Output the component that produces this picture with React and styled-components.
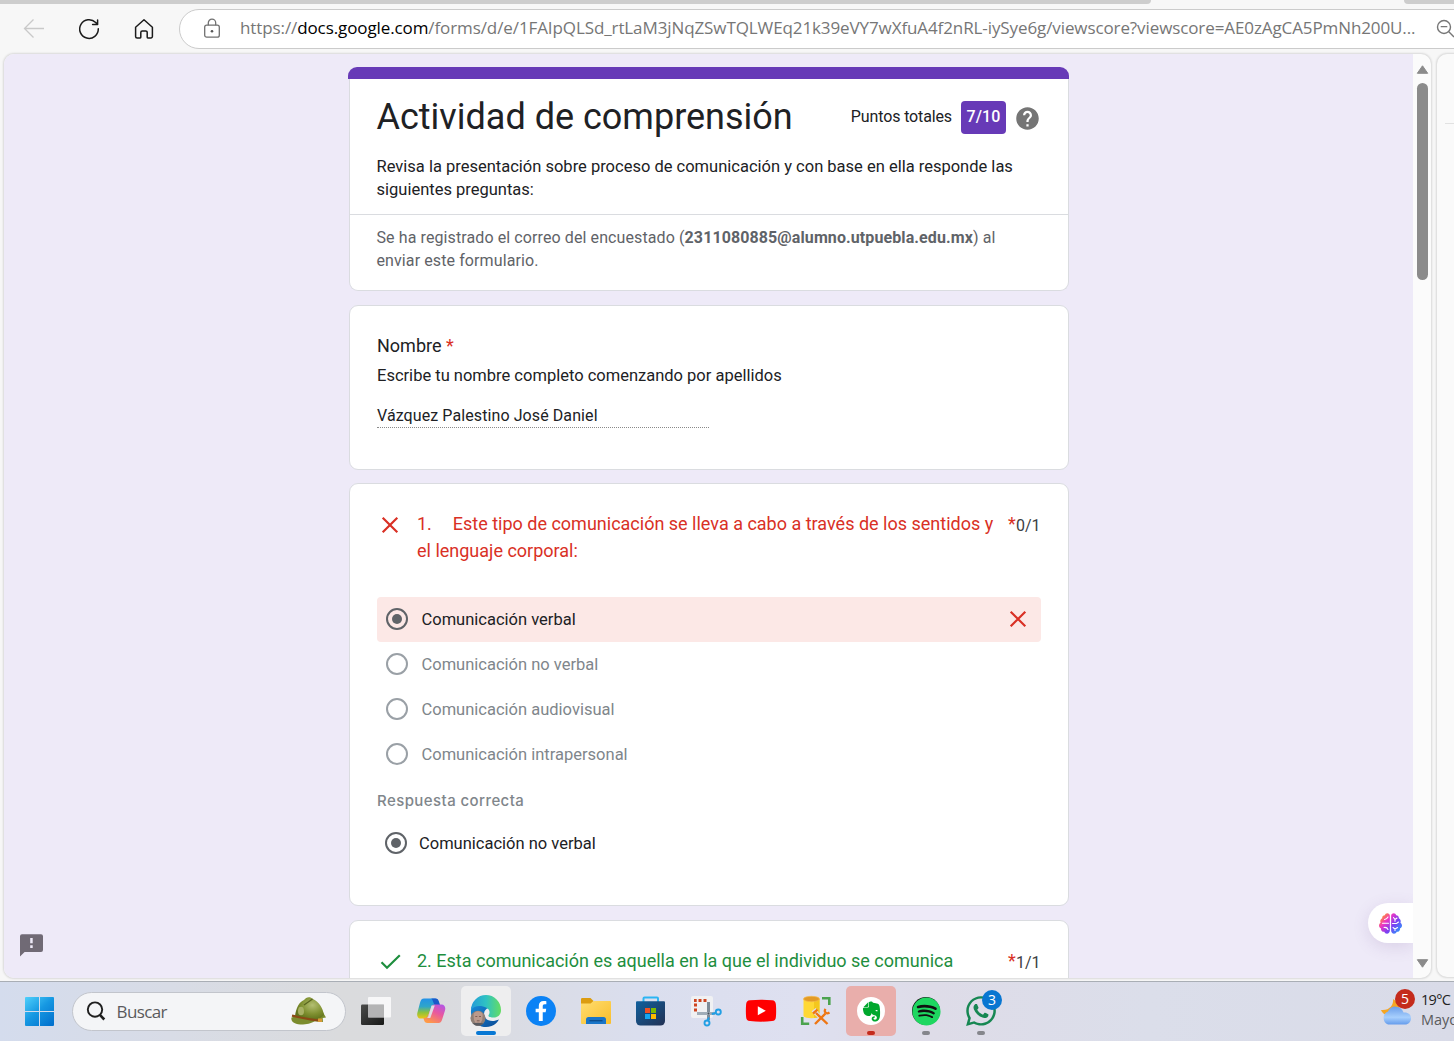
import React from 'react';
import styled, { createGlobalStyle } from 'styled-components';
import { FaEvernote, FaSpotify, FaWhatsapp, FaBrain, FaFacebookF } from 'react-icons/fa';

const Global = createGlobalStyle`
  * { box-sizing: border-box; }
  html, body { margin: 0; padding: 0; }
  body { width: 1454px; height: 1041px; overflow: hidden; background: #f7f7f7; font-family: Roboto, "Liberation Sans", sans-serif; }
  svg { display: block; flex: none; }
`;

const Window = styled.div`
  width: 1454px; height: 1041px; overflow: hidden; display: flex; flex-direction: column; background: #f7f7f7;
`;

/* Browser chrome */
const TabStrip = styled.div`
  height: 4px; flex: none; display: flex; justify-content: space-between;
`;
const TabEdge = styled.div`
  width: ${p => p.$w}px; background: #cdcdcd;
  border-radius: ${p => (p.$side === 'left' ? '0 0 9px 0' : '0 0 0 9px')};
`;
const Toolbar = styled.div`
  height: 49px; flex: none; display: flex; align-items: flex-start; padding: 5px 0 0 22px;
`;
const NavButton = styled.div`
  width: 24px; height: 40px; margin-right: 31px; margin-top: 0; display: flex; align-items: center; justify-content: center;
`;
const AddressBar = styled.div`
  width: 1400px; flex: none; height: 40px; margin-left: -8px; border: 1px solid #cbcbcb; border-radius: 20px; background: #fff;
  display: flex; align-items: center; padding-left: 22px;
`;
const Url = styled.div`
  width: 1178px; margin: 0 0 2px 18px; white-space: nowrap; color: #767676;
  font: 400 17px/24px "Open Sans", "Noto Sans", sans-serif; letter-spacing: ${p => p.$ls}px;
  b { font-weight: 400; color: #000; }
`;
const MagnifierBox = styled.div`margin: 0 0 1px 18px;`;

/* Content panes */
const Panes = styled.div`
  flex: none; height: 928px; padding-left: 4px; display: flex; gap: 6px;
`;
const PagePane = styled.div`
  position: relative; width: 1427px; height: 924px; margin-top: 1px; border-radius: 10px; overflow: hidden; flex: none;
  display: flex; background: #fbfbfb; box-shadow: 0 0 2px 1px rgba(0, 0, 0, 0.12);
`;
const Viewport = styled.div`
  position: relative; width: 1409px; height: 924px; background: #eeeaf8; overflow: hidden; padding: 13px 0 0 344px;
`;
const Scrollbar = styled.div`
  width: 18px; height: 924px; display: flex; flex-direction: column; align-items: center; padding: 11px 0 10px; 
`;
const Thumb = styled.div`
  width: 11px; height: 197px; margin: 9px 0 auto; border-radius: 6px; background: #8b8b8b;
`;
const SidePane = styled.div`
  width: 60px; flex: none; height: 923px; margin-top: 1px; border-radius: 10px; background: #fafafa; box-shadow: 0 0 2px 1px rgba(0, 0, 0, 0.12);
  padding: 69px 0 0 8px;
`;
const SideRule = styled.div`height: 1px; background: #e2e2e2;`;

/* Form */
const Form = styled.main`
  width: 721px; display: flex; flex-direction: column; align-items: flex-end; gap: 14px;
`;
const Card = styled.section`
  width: 720px; height: ${p => p.$h}px; flex: none; background: #fff; border: 1px solid #dadce0; border-radius: 9px;
  margin-top: ${p => p.$mt || 0}px; padding: ${p => p.$pad || 0}px 27px 0;
`;
const HeaderCard = styled(Card)`
  width: 721px; padding: 0; border: 0; background: none;
`;
const AccentBar = styled.div`height: 12px; background: #673ab7; border-radius: 9px 9px 0 0;`;
const HeaderBody = styled.div`
  margin-left: 1px; height: 212px; background: #fff; border: 1px solid #dadce0; border-top: 0; border-radius: 0 0 9px 9px;
`;
const HeaderTop = styled.div`
  height: 136px; border-bottom: 1px solid #dadce0; padding: 16px 29px 0 26.5px;
`;
const TitleRow = styled.div`display: flex; height: 45px; align-items: flex-start; margin-bottom: 15px;`;
const Title = styled.h1`
  margin: 0; flex: 1; font-size: 36px; line-height: 45px; font-weight: 400; color: #202124; white-space: nowrap;
`;
const Score = styled.div`display: flex; align-items: center; margin-top: 6px; height: 33px;`;
const ScoreBadge = styled.span`
  width: 45px; height: 33px; margin: 0 10px 0 9px; border-radius: 4px; background: #673ab7; color: #fff;
  font-size: 16px; font-weight: 500; line-height: 31px; text-align: center; letter-spacing: 0.1px;
`;
const Line = styled.div`
  font-size: ${p => p.$size || 16.5}px; line-height: ${p => p.$lh || 23}px; color: ${p => p.$color || '#202124'};
  letter-spacing: ${p => p.$ls || 0}px; font-weight: 400; white-space: pre;
`;
const ScoreLabel = styled(Line)`margin-bottom: 2px;`;
const HelpWrap = styled.span`margin: 1px -2px 0;`;
const FieldHint = styled(Line)`margin-top: 5px;`;
const EmailNote = styled.div`padding: 11px 26.5px 0;`;
const Required = styled.span`color: #d93025;`;
const QuestionNumber = styled.span`margin-right: 3px;`;
const AnswerField = styled.div`
  width: 332px; height: 24px; margin-top: 17px; border-bottom: 1px dotted #8a8a8a;
`;
const QuestionRow = styled.div`display: flex; align-items: flex-start; height: ${p => p.$h}px;`;
const MarkBox = styled.div`width: 40px; flex: none; padding: ${p => p.$top}px 0 0 3px;`;
const QuestionText = styled.div`flex: 1;`;
const Points = styled.div`
  width: 33px; flex: none; display: flex; align-items: flex-start; font-size: 16px; line-height: 27px; color: #3c4043; padding-top: 2px;
  ${Required} { font-size: 18px; line-height: 24px; width: 8px; }
`;
const Option = styled.div`
  height: 45px; display: flex; align-items: center; padding: 0 13px 0 9px; border-radius: 4px; background: ${p => (p.$wrong ? '#fce8e6' : 'transparent')};
`;
const OptionLabel = styled(Line)`flex: 1; margin-left: 13.5px;`;
const Options = styled.div`width: 664px;`;
const CorrectTitle = styled.div`
  margin-top: 12px; font: 500 15px/24px Inter, Roboto, sans-serif; color: #80868b; letter-spacing: ${p => p.$ls}px;
`;
const CorrectRow = styled.div`
  display: flex; align-items: center; height: 46px; margin-top: 7px; padding-left: 7.5px;
  ${OptionLabel} { margin-left: 12.5px; }
`;
const RadioRing = styled.span`
  width: 22px; height: 22px; flex: none; margin-bottom: 1px; border-radius: 50%; border: 2px solid ${p => (p.$on ? '#5f6368' : '#9aa0a6')};
  display: flex; align-items: center; justify-content: center;
  &::after { content: ''; width: 10px; height: 10px; border-radius: 50%; background: ${p => (p.$on ? '#5f6368' : 'transparent')}; }
`;
const WrongMark = styled.span`margin-bottom: 1px;`;

const FeedbackButton = styled.div`position: absolute; left: 16px; bottom: 21px;`;
const BrainButton = styled.div`
  position: absolute; right: 0; bottom: 35px; width: 45px; height: 40px; border-radius: 20px 0 0 20px; background: #fff;
  box-shadow: 0 4px 16px rgba(120, 80, 150, 0.16); display: flex; align-items: center; padding-left: 11px;
`;

/* Taskbar */
const Taskbar = styled.footer`
  height: 60px; flex: none; border-top: 1px solid #a9aeb5; display: flex; align-items: flex-start; padding: 4px 0 0 25px;
  background: linear-gradient(90deg, #d4dced 0, #d8dce6 170px, #dadbdd 340px, #dadbde 440px, #dadeee 640px, #dee0f0 800px, #dedce8 930px, #dbdeea 1150px, #d9dbe8 1454px);
`;
const StartButton = styled.div`margin-top: 11px; width: 46.500px;`;
const SearchBox = styled.div`
  width: 274px; height: 39px; margin: 6px 5.500px 0 0; border: 1px solid #c2c5cc; border-radius: 20px; background: #f4f5f7;
  display: flex; align-items: center; padding: 0 18px 1px 13px;
`;
const SearchLabel = styled.span`
  flex: 1; margin: 1px 0 0 11px; color: #5a5a5c; font: 400 17px/24px "Open Sans", "Noto Sans", sans-serif; letter-spacing: -0.6px;
`;
const Apps = styled.div`display: flex; gap: 5px;`;
const AppSlot = styled.div`
  position: relative; width: 50px; height: 50px; border-radius: 5px; display: flex; align-items: center; justify-content: center;
  background: ${p => p.$bg || 'transparent'};
`;
const Indicator = styled.span`
  position: absolute; left: 50%; bottom: 1px; width: ${p => p.$w}px; margin-left: ${p => -p.$w / 2}px; height: 4px; border-radius: 2px; background: ${p => p.$c};
`;
const CountBadge = styled.span`
  position: absolute; left: ${p => p.$x}px; top: ${p => p.$y}px; width: 20px; height: 20px; border-radius: 50%; background: ${p => p.$c}; color: #fff;
  font: 400 14px/20px "Open Sans", sans-serif; text-align: center;
`;
const Disc = styled.span`
  width: ${p => p.$s}px; height: ${p => p.$s}px; border-radius: 50%; background: ${p => p.$c}; color: ${p => p.$fg || '#fff'};
  display: flex; align-items: center; justify-content: center;
`;
const Weather = styled.div`position: relative; margin-left: auto; width: 75px; height: 50px; display: flex; flex: none;`;
const WeatherArt = styled.span`position: absolute; left: 1px; top: 9px;`;
const WeatherText = styled.div`
  margin-left: 42px; padding-top: 4px; font: 400 14.5px/20px "Open Sans", sans-serif; color: #222; letter-spacing: -0.7px; white-space: nowrap;
  span { display: block; color: #5b5b5d; letter-spacing: 0; }
`;

const Cross = () => (
  <svg width="20" height="20" viewBox="0 0 20 20"><path d="M2.7 2.7 17.3 17.3M17.3 2.7 2.7 17.3" stroke="#d93025" strokeWidth="2.2" /></svg>
);
const Check = () => (
  <svg width="22" height="18" viewBox="0 0 22 18"><path d="M1.5 9.3 7 14.8 19.8 2.2" fill="none" stroke="#1e8e3e" strokeWidth="2.2" /></svg>
);

const Choice = ({ label, on, wrong }) => (
  <Option $wrong={wrong}>
    <RadioRing $on={on} />
    <OptionLabel $color={on ? '#202124' : '#80868b'}>{label}</OptionLabel>
    {wrong && <WrongMark><Cross /></WrongMark>}
  </Option>
);

const BackIcon = () => (
  <svg width="24" height="24" viewBox="0 0 24 24" fill="none" stroke="#c9c9c9" strokeWidth="1.3"><path d="M22 11.500H2.500M11.500 2.500 2.500 11.500l9 9" /></svg>
);
const ReloadIcon = () => (
  <svg width="24" height="24" viewBox="0 0 24 24" fill="none" stroke="#1b1b1b" strokeWidth="1.5" strokeLinecap="round" strokeLinejoin="round">
    <path d="M21.300 11.800A9.300 9.300 0 1 1 18.700 5.600L20.400 7.300M20.600 3v4.600h-5" />
  </svg>
);
const HomeIcon = () => (
  <svg width="24" height="24" viewBox="0 0 24 24" fill="none" stroke="#1b1b1b" strokeWidth="1.5" strokeLinejoin="round">
    <path d="M3.6 10.2 12 2.8l8.4 7.4v9.2a1.5 1.5 0 0 1-1.5 1.5h-3.1a.6.6 0 0 1-.6-.6v-4.9a1.5 1.5 0 0 0-1.5-1.5h-3.4a1.5 1.5 0 0 0-1.5 1.5v4.9a.6.6 0 0 1-.6.6H5.1a1.5 1.5 0 0 1-1.5-1.5Z" />
  </svg>
);
const LockIcon = () => (
  <svg width="20" height="22" viewBox="0 0 20 22" fill="none" stroke="#707070" strokeWidth="1.3">
    <rect x="2.7" y="7.2" width="14.6" height="12" rx="2" /><path d="M6.3 7.200V4.900a3.700 3.700 0 0 1 7.400 0v2.300" /><circle cx="10" cy="13.200" r="1.300" fill="#555" stroke="none" />
  </svg>
);
const ZoomOutIcon = () => (
  <svg width="20" height="20" viewBox="0 0 20 20" fill="none" stroke="#767676" strokeWidth="1.4">
    <circle cx="8" cy="8" r="6.5" /><path d="M4.7 7.6h6.6M12.8 12.8 18 18" />
  </svg>
);
const HelpIcon = () => (
  <svg width="27" height="27" viewBox="0 0 24 24" fill="#757575">
    <path d="M12 2C6.48 2 2 6.48 2 12s4.48 10 10 10 10-4.48 10-10S17.52 2 12 2zm1 17h-2v-2h2v2zm2.07-7.75-.9.92C13.45 12.9 13 13.5 13 15h-2v-.5c0-1.1.45-2.1 1.17-2.83l1.24-1.26c.37-.36.59-.86.59-1.41 0-1.1-.9-2-2-2s-2 .9-2 2H8c0-2.21 1.79-4 4-4s4 1.79 4 4c0 .88-.36 1.68-.93 2.25z" />
  </svg>
);
const FeedbackIcon = () => (
  <svg width="23" height="23" viewBox="0 0 23 23">
    <path d="M2 .2h19a2 2 0 0 1 2 2V16a2 2 0 0 1-2 2H4.6L0 22.6V2.2a2 2 0 0 1 2-2Z" fill="#706a75" />
    <path d="M10.2 4h2.5v5.3h-2.5zM10.2 11.3h2.5v2.6h-2.5z" fill="#eeeaf8" />
  </svg>
);
const Triangle = ({ down }) => (
  <svg width="13" height="9" viewBox="0 0 13 9"><path d={down ? 'M1.3.7h10.4L6.500 8.200Z' : 'M1.300 8.300h10.400L6.500.8Z'} fill="#8b8b8b" stroke="#8b8b8b" strokeLinejoin="round" /></svg>
);
const BrainIcon = () => (
  <svg width="23" height="21" viewBox="0 0 23 21">
    <defs>
      <linearGradient id="brain" gradientUnits="userSpaceOnUse" x1="0" y1="0" x2="576" y2="512"><stop offset="0" stopColor="#ff9a2e" /><stop offset=".14" stopColor="#ff8a3a" /><stop offset=".34" stopColor="#ee35c4" /><stop offset=".6" stopColor="#7b3ff2" /><stop offset="1" stopColor="#18b0ff" /></linearGradient>
    </defs>
    <FaBrain width="23" height="21" size={23} y="-1" style={{ fill: 'url(#brain)' }} />
    <g fill="none" stroke="#fff" strokeWidth="1.100" strokeLinecap="round">
      <path d="M5.500 6.500Q8 6 9 4M3.500 10.200H9.500M5 14.500q3-.5 4 2" />
      <path d="M14.500 4.500 16 6.500 18 5M16 6.500v1.700M13.500 10.500h4l2-1.500M14 14.500l2 1.500 2.500-1.500M16 16v1.500" />
    </g>
  </svg>
);

const WindowsIcon = () => (
  <svg width="29" height="29" viewBox="0 0 29 29">
    <defs><linearGradient id="win" gradientUnits="userSpaceOnUse" x1="0" y1="0" x2="25" y2="29"><stop offset="0" stopColor="#4fd0fb" /><stop offset=".5" stopColor="#1698e2" /><stop offset="1" stopColor="#0272ce" /></linearGradient></defs>
    <path d="M1 0h13v14H0V1a1 1 0 0 1 1-1ZM15 0h13a1 1 0 0 1 1 1v13H15ZM0 15h14v14H1a1 1 0 0 1-1-1ZM15 15h14v13a1 1 0 0 1-1 1H15Z" fill="url(#win)" />
  </svg>
);
const SearchIcon = () => (
  <svg width="20" height="20" viewBox="0 0 20 20" fill="none" stroke="#1f1f1f"><circle cx="9" cy="8.600" r="7.200" strokeWidth="1.900" /><path d="m13.700 13.600 4.600 4.900" strokeWidth="2.600" /></svg>
);
const HelmetIcon = () => (
  <svg width="37" height="30" viewBox="0 0 37 30">
    <defs><radialGradient id="helm" cx=".6" cy=".35" r=".65"><stop offset="0" stopColor="#b4bf72" /><stop offset=".6" stopColor="#7f9030" /><stop offset="1" stopColor="#5f711b" /></radialGradient></defs>
    <path d="M1.500 21.500C.5 26 5 28.500 13 28.500c6 0 9-2.200 12-3.200l8 .7-.3-4 3.300-.5L31 13Z" fill="#7b8c2e" />
    <path d="M5 20C6 12 9 6 14 4c2-3 6-4 9-1 6 3 10 9 11 16-4 4-8 5-13 5Z" fill="url(#helm)" />
    <ellipse cx="11" cy="15" rx="3" ry="4.300" fill="#a8b165" />
    <path d="M14 9 22.500 3" stroke="#59651f" fill="none" strokeWidth="1.200" />
    <path d="M2 19.700c8 1.600 16 4 29 5" fill="none" stroke="#8b4a16" strokeWidth="2.200" />
    <path d="M28 22.500h4v3.500h-4z" fill="#d79a36" />
  </svg>
);
const Slot = ({ children }) => <svg width="50" height="50" viewBox="0 0 50 50">{children}</svg>;

const TaskViewIcon = () => (
  <Slot>
    <defs><linearGradient id="tv" x1="0" y1="0" x2="1" y2="1"><stop offset="0" stopColor="#4a4b4a" /><stop offset="1" stopColor="#171817" /></linearGradient></defs>
    <rect x="10" y="18.500" width="23" height="20.500" rx="1.200" fill="url(#tv)" />
    <rect x="17" y="11" width="23" height="20.500" rx="1" fill="#fff" opacity=".78" />
    <rect x="17" y="18.500" width="16" height="13" fill="#a9aaab" opacity=".75" />
  </Slot>
);
const CopilotIcon = () => (
  <Slot>
    <defs>
      <linearGradient id="cpA" x1=".2" y1="0" x2=".2" y2="1"><stop offset="0" stopColor="#2391e8" /><stop offset=".4" stopColor="#2fa6c9" /><stop offset=".7" stopColor="#8fc33c" /><stop offset="1" stopColor="#efc514" /></linearGradient>
      <linearGradient id="cpB" x1=".9" y1="0" x2=".3" y2="1"><stop offset="0" stopColor="#b156e8" /><stop offset=".45" stopColor="#e857a0" /><stop offset="1" stopColor="#ff9b45" /></linearGradient>
    </defs>
    <path d="M18 12.500h11c2 0 2.800 1.300 3.400 3l1.300 3.700h-5c-2 0-3 1-3.600 2.700l-3 8c-.6 1.700-1.500 2.700-3.300 2.700h-4c-3 0-4.200-2.700-3.400-5.800l2.600-10c.7-2.800 1.800-4.300 4-4.300Z" fill="url(#cpA)" />
    <path d="M25 12.500h4.500c2 0 2.800 1.300 3.400 3l1.200 3.700H30c-3 0-3-6.700-5-6.700Z" fill="#1959c9" />
    <path d="M32.500 37h-11c-2 0-3-1.300-3.500-3l-.6-2c2.800 0 4-.7 4.800-2.700l3-8c.6-1.700 1.600-2.700 3.300-2.700h7c3 0 4.400 2.700 3.500 5.800l-2.700 8.600c-.8 2.700-1.700 4-3.800 4Z" fill="url(#cpB)" />
    <path d="M25.500 19.500h3.300l-4.500 12.500h-3.300c1-.6 1.200-1.500 1.500-2.500Z" fill="#dddce4" />
  </Slot>
);
const EdgeIcon = () => (
  <Slot>
    <defs>
      <linearGradient id="edA" x1="0" y1=".5" x2="1" y2=".5"><stop offset="0" stopColor="#239bd9" /><stop offset=".5" stopColor="#2fc2c3" /><stop offset="1" stopColor="#65dd62" /></linearGradient>
      <linearGradient id="edB" x1="0" y1="0" x2="1" y2="1"><stop offset="0" stopColor="#168ddb" /><stop offset="1" stopColor="#0b4a95" /></linearGradient>
    </defs>
    <path d="M10 25a15 15 0 0 1 .5-4c4-4 13-5 17 1-4 1-6 6-3 10 3 4 9 3.500 13.500 1.500A15 15 0 0 1 10 25Z" fill="url(#edB)" />
    <path d="M10 24A15 15 0 0 1 40 24c.2 5-3.500 7.500-7.500 7.500-3 0-5.500-.8-5-2.300 2-2.200 1.200-5.700-2-7.400C20 19 13 19.500 10 24Z" fill="url(#edA)" />
    <circle cx="17" cy="32.300" r="7.500" fill="#8f7f76" />
    <path d="M12.500 29c0-5 9-5 9.200 0l-.5 5-2 3.600h-4.400L13 34Z" fill="#bb9a8c" />
    <path d="M14.300 30.500h2M18 30.500h2M15.800 34.800h2.800" stroke="#6d5048" strokeWidth=".8" />
    <path d="M11.500 37.200c3-.7 8-.7 11 0-3 3.400-8 3.400-11 0Z" fill="#5a5b60" />
  </Slot>
);
const ExplorerIcon = () => (
  <Slot>
    <defs><linearGradient id="exp" x1="0" y1="0" x2="1" y2="1"><stop offset="0" stopColor="#ffdd70" /><stop offset="1" stopColor="#f9be2b" /></linearGradient></defs>
    <path d="M10 13.200a1.200 1.200 0 0 1 1.200-1.200h8.300l3 3-2.500 4H10Z" fill="#dc9c10" />
    <path d="M10 17.500h9.500l3-2.500H39a1 1 0 0 1 1 1v21a1 1 0 0 1-1 1H11a1 1 0 0 1-1-1Z" fill="url(#exp)" />
    <path d="M15 38v-4.500a2.500 2.500 0 0 1 2.500-2.500h15a2.500 2.500 0 0 1 2.500 2.500V38Z" fill="#1975c8" /><path d="M18.500 34.700h13" stroke="#0c4b8b" strokeWidth="1.300" />
  </Slot>
);
const StoreIcon = () => (
  <Slot>
    <defs><linearGradient id="sto" x1="0" y1="0" x2="1" y2="1"><stop offset="0" stopColor="#10609d" /><stop offset="1" stopColor="#233154" /></linearGradient></defs>
    <path d="M17.500 17v-4.500a1 1 0 0 1 1-1h12.500a1 1 0 0 1 1 1V17" fill="none" stroke="#2cb5f3" strokeWidth="2" />
    <path d="M10 16.200a1 1 0 0 1 1-1h27a1 1 0 0 1 1 1V35a4.500 4.500 0 0 1-4.500 4.500h-20A4.500 4.500 0 0 1 10 35Z" fill="url(#sto)" />
    <path d="M19 22h5v5h-5z" fill="#f25022" /><path d="M25 22h5v5h-5z" fill="#7fba00" /><path d="M19 28h5v5h-5z" fill="#16a6f0" /><path d="M25 28h5v5h-5z" fill="#ffb900" />
  </Slot>
);
const SnipIcon = () => (
  <Slot>
    <rect x="10" y="10" width="22" height="22" rx="2" fill="#f0f1f3" />
    <path d="M13 14.500h2.700M17.500 14.500h3M22.500 14.500h3M14.500 17.500v3M14.500 22.500v3" fill="none" stroke="#cf4520" strokeWidth="3" />
    <path d="M27.500 16v18" stroke="#7f8c98" strokeWidth="3" /><path d="M16 27.500h18" stroke="#a1adb8" strokeWidth="3" />
    <circle cx="26" cy="37" r="2.500" fill="none" stroke="#229fe4" strokeWidth="1.900" /><circle cx="37.300" cy="26" r="2.500" fill="none" stroke="#229fe4" strokeWidth="1.900" />
    <path d="m26.500 34.500 1.500-3M34.800 27l-4 1" stroke="#229fe4" strokeWidth="2" /><circle cx="27.500" cy="27.500" r="1" fill="#444e58" />
  </Slot>
);
const YouTubeIcon = () => (
  <Slot><path d="M14 14.300q11-1.100 22 0c2.600.2 3.700 1.500 3.900 4.200q.5 6.500 0 12.500c-.2 2.700-1.300 3.900-3.900 4.100q-11 1.100-22 0c-2.600-.2-3.700-1.400-3.900-4.100q-.5-6 0-12.500c.2-2.700 1.300-4 3.900-4.200Z" fill="#f00" /><path d="m21.800 20.300 8 4.500-8 4.500Z" fill="#fff" /></Slot>
);
const DbToolIcon = () => (
  <Slot>
    <path d="M12.500 13v17c2 3 14 3 16 0V13Z" fill="#ffd835" /><path d="M23 15v17c3 0 5-1 5.500-2V13Z" fill="#f4c71d" /><ellipse cx="20.500" cy="13" rx="8" ry="2.700" fill="#e39b26" stroke="#f5bb4c" strokeWidth=".7" />
    <path d="M31 12.200h7.300v6.800M11.200 31v6.800h7" fill="none" stroke="#4ba34f" strokeWidth="2.600" />
    <path d="m25 27 11.500 11M22 27l4-3.300M34.500 27.500 24 38" stroke="#dfe0ee" strokeWidth="4.400" fill="none" />
    <path d="m25 27 11.500 11M22 27.500l4.500-3.800M34.500 27.500 24 38" stroke="#ee7615" strokeWidth="2.400" fill="none" /><path d="M34.500 22.800c-2 3 .7 5.800 4 3.700" fill="none" stroke="#ee7615" strokeWidth="2.200" />
  </Slot>
);
const WeatherIcon = () => (
  <svg width="32" height="30" viewBox="0 0 32 30">
    <defs><linearGradient id="cl" x1="0" y1="0" x2="0" y2="1"><stop offset="0" stopColor="#6b9ee9" /><stop offset=".6" stopColor="#a7cffd" /><stop offset="1" stopColor="#659cec" /></linearGradient></defs>
    <path d="M13 4c1 6-4 12-12 11 2 5 8 7 14 4s7-10-2-15Z" fill="#f6a623" />
    <path d="M8 29.500a7 7 0 0 1 0-13 8.300 8.300 0 0 1 15.500 1C28 17 31 19.500 31 23.200c0 3.500-2.500 6.300-6 6.300Z" fill="url(#cl)" />
  </svg>
);

export default function App() {
  return (
    <Window>
      <Global />
      <TabStrip><TabEdge $w={1151} $side="left" /><TabEdge $w={50} $side="right" /></TabStrip>
      <Toolbar>
        <NavButton><BackIcon /></NavButton>
        <NavButton><ReloadIcon /></NavButton>
        <NavButton><HomeIcon /></NavButton>
        <AddressBar>
          <LockIcon />
          <Url $ls={-0.1}>https://<b>docs.google.com</b>/forms/d/e/1FAIpQLSd_rtLaM3jNqZSwTQLWEq21k39eVY7wXfuA4f2nRL-iySye6g/viewscore?viewscore=AE0zAgCA5PmNh200U...</Url>
          <MagnifierBox><ZoomOutIcon /></MagnifierBox>
        </AddressBar>
      </Toolbar>
      <Panes>
        <PagePane>
          <Viewport>
            <Form>
              <HeaderCard $h={224}>
                <AccentBar />
                <HeaderBody>
                  <HeaderTop>
                    <TitleRow>
                      <Title>Actividad de comprensión</Title>
                      <Score><ScoreLabel $size={16} $ls={-0.13}>Puntos totales</ScoreLabel><ScoreBadge>7/10</ScoreBadge><HelpWrap><HelpIcon /></HelpWrap></Score>
                    </TitleRow>
                    <Line>Revisa la presentación sobre proceso de comunicación y con base en ella responde las</Line>
                    <Line>siguientes preguntas:</Line>
                  </HeaderTop>
                  <EmailNote>
                    <Line $size={16} $ls={0.1} $color="#5f6368">Se ha registrado el correo del encuestado (<b>2311080885@alumno.utpuebla.edu.mx</b>) al</Line>
                    <Line $size={16} $ls={0.1} $color="#5f6368">enviar este formulario.</Line>
                  </EmailNote>
                </HeaderBody>
              </HeaderCard>

              <Card $h={165} $pad={26}>
                <Line $size={18} $lh={27}>Nombre <Required>*</Required></Line>
                <FieldHint>Escribe tu nombre completo comenzando por apellidos</FieldHint>
                <AnswerField><Line $size={16} $ls={0.09}>Vázquez Palestino José Daniel</Line></AnswerField>
              </Card>

              <Card $h={423} $mt={-1} $pad={26}>
                <QuestionRow $h={87}>
                  <MarkBox $top={5}><Cross /></MarkBox>
                  <QuestionText>
                    <Line $size={18} $lh={27} $color="#d93025"><QuestionNumber>1.</QuestionNumber>{'\u00a0\u00a0\u00a0 Este tipo de comunicación se lleva a cabo a través de los sentidos y'}</Line>
                    <Line $size={18} $lh={27} $color="#d93025">el lenguaje corporal:</Line>
                  </QuestionText>
                  <Points><Required>*</Required>0/1</Points>
                </QuestionRow>
                <Options>
                  <Choice label="Comunicación verbal" on wrong />
                  <Choice label="Comunicación no verbal" />
                  <Choice label="Comunicación audiovisual" />
                  <Choice label="Comunicación intrapersonal" />
                </Options>
                <CorrectTitle $ls={0.42}>Respuesta correcta</CorrectTitle>
                <CorrectRow><RadioRing $on /><OptionLabel>Comunicación no verbal</OptionLabel></CorrectRow>
              </Card>

              <Card $h={200} $pad={26}>
                <QuestionRow $h={86}>
                  <MarkBox $top={6}><Check /></MarkBox>
                  <QuestionText>
                    <Line $size={18} $lh={27} $color="#1e8e3e">2. Esta comunicación es aquella en la que el individuo se comunica</Line>
                  </QuestionText>
                  <Points><Required>*</Required>1/1</Points>
                </QuestionRow>
              </Card>
            </Form>
            <FeedbackButton><FeedbackIcon /></FeedbackButton>
            <BrainButton><BrainIcon /></BrainButton>
          </Viewport>
          <Scrollbar><Triangle /><Thumb /><Triangle down /></Scrollbar>
        </PagePane>
        <SidePane><SideRule /></SidePane>
      </Panes>
      <Taskbar>
        <StartButton><WindowsIcon /></StartButton>
        <SearchBox><SearchIcon /><SearchLabel>Buscar</SearchLabel><HelmetIcon /></SearchBox>
        <Apps>
          <AppSlot><TaskViewIcon /></AppSlot>
          <AppSlot><CopilotIcon /></AppSlot>
          <AppSlot $bg="#eeeeef"><EdgeIcon /><Indicator $w={20} $c="#0878d4" /></AppSlot>
          <AppSlot><Disc $s={30} $c="#0b82f5"><FaFacebookF size={20} /></Disc></AppSlot>
          <AppSlot><ExplorerIcon /></AppSlot>
          <AppSlot><StoreIcon /></AppSlot>
          <AppSlot><SnipIcon /></AppSlot>
          <AppSlot><YouTubeIcon /></AppSlot>
          <AppSlot><DbToolIcon /></AppSlot>
          <AppSlot $bg="#e9aeab"><Disc $s={28} $c="#fff" $fg="#00a82d"><FaEvernote size={23} /></Disc><Indicator $w={8} $c="#c42b1c" /></AppSlot>
          <AppSlot><Disc $s={28} $c="#111" $fg="#1ed760"><FaSpotify size={29} /></Disc><Indicator $w={8} $c="#85868c" /></AppSlot>
          <AppSlot><FaWhatsapp size={34} color="#168752" /><CountBadge $x={26} $y={4} $c="#0876d1">3</CountBadge><Indicator $w={8} $c="#85868c" /></AppSlot>
        </Apps>
        <Weather>
          <WeatherArt><WeatherIcon /></WeatherArt>
          <CountBadge $x={16} $y={3} $c="#c42b1c">5</CountBadge>
          <WeatherText>19°C<span>Mayo</span></WeatherText>
        </Weather>
      </Taskbar>
    </Window>
  );
}
